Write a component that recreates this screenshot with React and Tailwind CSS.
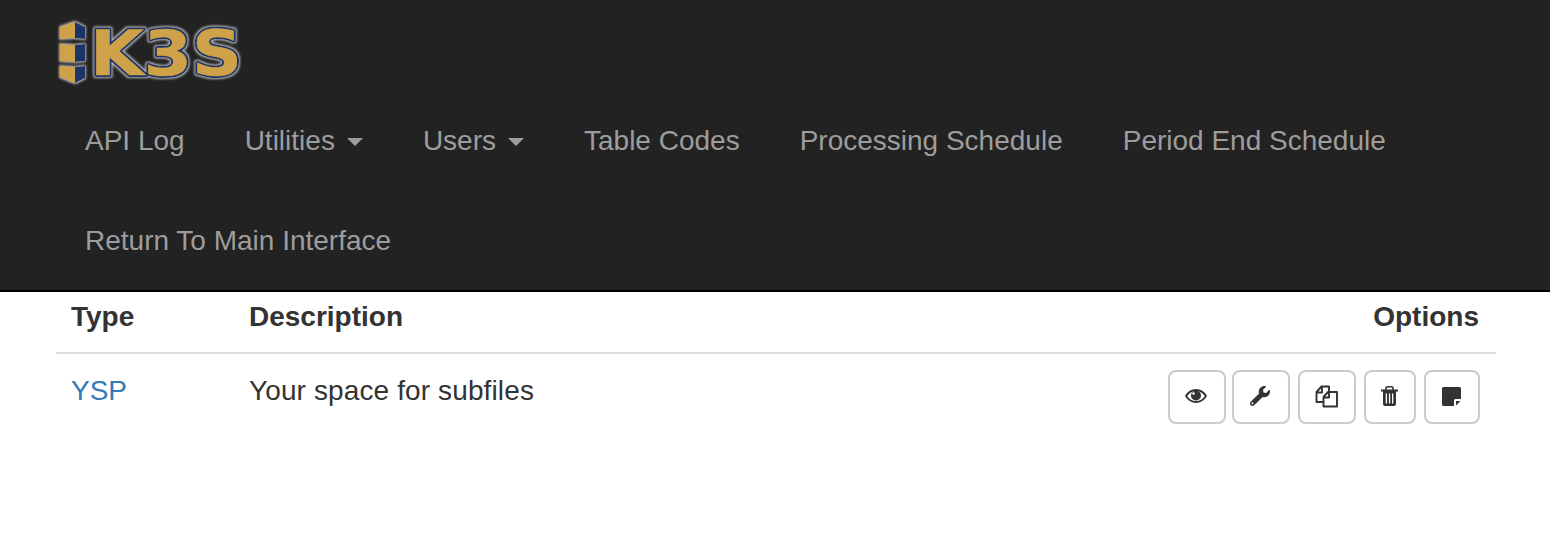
import React from 'react';
import { FaWrench } from 'react-icons/fa';

const Logo = () => (
  <svg width="192" height="84" viewBox="0 0 192 84" className="block">
    <defs>
      <filter id="glow" x="-10%" y="-20%" width="120%" height="140%">
        <feMorphology in="SourceAlpha" operator="dilate" radius="1.2" result="fat" />
        <feGaussianBlur in="fat" stdDeviation="1.1" result="blur" />
        <feFlood floodColor="#b4b4b4" />
        <feComposite in2="blur" operator="in" result="halo" />
        <feMerge>
          <feMergeNode in="halo" />
          <feMergeNode in="SourceGraphic" />
        </feMerge>
      </filter>
    </defs>
    <g filter="url(#glow)">
      {/* stacked block */}
      <polygon points="4,11 19,6 19,22 4,23" fill="#cfa248" />
      <polygon points="19,6 29,11 29,23 19,22" fill="#1d3566" />
      <polygon points="4,28 19,29 19,46 4,45" fill="#cfa248" />
      <polygon points="19,29 29,28 29,45 19,46" fill="#1d3566" />
      <polygon points="4,50 19,51 19,67 4,61" fill="#cfa248" />
      <polygon points="19,51 29,50 29,62 19,67" fill="#1d3566" />
      {/* wordmark */}
      <text x="34" y="59" fontFamily="DejaVu Sans, sans-serif" fontWeight="700" fontSize="63" fill="#1d3566" stroke="#1d3566" strokeWidth="4" strokeLinejoin="round" textLength="152" lengthAdjust="spacingAndGlyphs">K3S</text>
      <text x="34" y="59" fontFamily="DejaVu Sans, sans-serif" fontWeight="700" fontSize="63" fill="#cfa248" stroke="#cfa248" strokeWidth="0.500" textLength="152" lengthAdjust="spacingAndGlyphs">K3S</text>
    </g>
  </svg>
);

const EyeIcon = () => (
  <svg width="22" height="14" viewBox="0 0 22 14">
    <path d="M1 7C3.500 3 7 1 11 1s7.500 2 10 6c-2.500 4-6 6-10 6S3.500 11 1 7z" fill="none" stroke="#333" strokeWidth="1.800" />
    <circle cx="11" cy="6.500" r="5" fill="#333" />
    <circle cx="8.500" cy="4.500" r="1.300" fill="#fff" />
  </svg>
);

const CopyIcon = () => (
  <svg width="23" height="23" viewBox="0 0 23 23" fill="none" stroke="#333" strokeWidth="1.900" strokeLinejoin="round">
    <path d="M9 17H1.500V7l5-5.500H14V7" />
    <path d="M1.500 7.500h5.500V1.500" />
    <path d="M8.500 21.500V12L13 7h9v14.500z" fill="#fff" />
    <path d="M8.500 12.500H14V7" />
  </svg>
);

const TrashIcon = () => (
  <svg width="17" height="20" viewBox="0 0 17 20">
    <path d="M5 4V2.200Q5 .800 6.500 .800h4Q12 .800 12 2.200V4" fill="none" stroke="#333" strokeWidth="1.600" />
    <rect x="0" y="3.500" width="17" height="2" fill="#333" />
    <path d="M2 5h13v13q0 2-2 2H4q-2 0-2-2z" fill="#333" />
    <rect x="4.700" y="7.500" width="1.300" height="10" fill="#fff" />
    <rect x="7.900" y="7.500" width="1.300" height="10" fill="#fff" />
    <rect x="11" y="7.500" width="1.300" height="10" fill="#fff" />
  </svg>
);

const NoteIcon = () => (
  <svg width="19" height="19" viewBox="0 0 19 19">
    <path d="M1.500 0h16A1.500 1.500 0 0 1 19 1.500V12h-5.500a1.500 1.500 0 0 0-1.500 1.500V19H1.500A1.500 1.500 0 0 1 0 17.500v-16A1.500 1.500 0 0 1 1.500 0z" fill="#333" />
    <path d="M14 14h4.500L14 18.500z" fill="#333" />
  </svg>
);

const NavLink = ({ children, caret }) => (
  <a className="flex h-[100px] items-center px-[30px] pt-[2px] text-[#9d9d9d]">
    {children}
    {caret && <span className="ml-[12px] mt-[2px] h-0 w-0 border-x-[8px] border-t-[8px] border-x-transparent border-t-[#9d9d9d]" />}
  </a>
);

const IconButton = ({ className, children }) => (
  <button className={`flex h-[54px] items-center justify-center rounded-[8px] border-2 border-[#ccc] bg-white pb-[2px] pr-[2px] text-[#333] ${className}`}>
    {children}
  </button>
);

export default function App() {
  return (
    <div className="min-h-[534px] bg-white font-['Liberation_Sans',Arial,sans-serif] text-[28px] leading-[40px] text-[#333]">
      <nav className="h-[292px] border-b-2 border-black bg-[#222]">
        <div className="h-[90px] pl-[56px] pt-[6px]">
          <div className="mt-[10px] h-[74px]">
            <Logo />
          </div>
        </div>
        <div className="flex flex-wrap pl-[55px]">
          <NavLink>API Log</NavLink>
          <NavLink caret>Utilities</NavLink>
          <NavLink caret>Users</NavLink>
          <NavLink>Table Codes</NavLink>
          <NavLink>Processing Schedule</NavLink>
          <NavLink>Period End Schedule</NavLink>
          <div className="basis-full" />
          <NavLink>Return To Main Interface</NavLink>
        </div>
      </nav>

      <div className="pl-[56px] pr-[54px]">
        <table className="w-full border-collapse">
          <thead>
            <tr className="border-b-2 border-[#ddd]">
              <th className="w-[177px] pb-[15px] pl-[15px] pt-[5px] text-left">Type</th>
              <th className="pb-[15px] pl-[16px] pt-[5px] text-left">Description</th>
              <th className="pb-[15px] pr-[17px] pt-[5px] text-right">Options</th>
            </tr>
          </thead>
          <tbody>
            <tr>
              <td className="pl-[15px] pt-[17px] align-top text-[#337ab7]">YSP</td>
              <td className="pl-[16px] pt-[17px] align-top tracking-[0.12px]">Your space for subfiles</td>
              <td className="pb-[16px] pr-[16px] pt-[16px]">
                <div className="flex justify-end">
                  <IconButton className="w-[58px]"><EyeIcon /></IconButton>
                  <IconButton className="ml-[6px] w-[58px]"><FaWrench size={20} /></IconButton>
                  <IconButton className="ml-[8px] w-[58px]"><CopyIcon /></IconButton>
                  <IconButton className="ml-[8px] w-[52px]"><TrashIcon /></IconButton>
                  <IconButton className="ml-[8px] w-[56px]"><NoteIcon /></IconButton>
                </div>
              </td>
            </tr>
          </tbody>
        </table>
      </div>
    </div>
  );
}
